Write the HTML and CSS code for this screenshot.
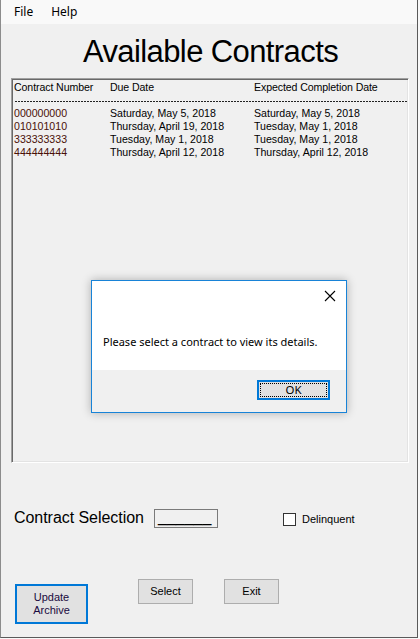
FILE: index.html
```html
<!DOCTYPE html>
<html>
<head>
<meta charset="utf-8">
<link rel="stylesheet" href="styles.css">
</head>
<body>
<div class="window">
  <div class="menubar">
    <span class="menu-item">File</span>
    <span class="menu-item">Help</span>
  </div>
  <h1 class="title">Available Contracts</h1>
  <div class="listbox">
    <div class="list-row list-head">
      <span>Contract Number</span>
      <span>Due Date</span>
      <span class="col3">Expected Completion Date</span>
    </div>
    <div class="dots"></div>
    <div class="list-rows">
      <div class="list-row"><span class="num">000000000</span><span>Saturday, May 5, 2018</span><span>Saturday, May 5, 2018</span></div>
      <div class="list-row"><span class="num">010101010</span><span>Thursday, April 19, 2018</span><span>Tuesday, May 1, 2018</span></div>
      <div class="list-row"><span class="num">333333333</span><span>Tuesday, May 1, 2018</span><span>Tuesday, May 1, 2018</span></div>
      <div class="list-row"><span class="num">444444444</span><span>Thursday, April 12, 2018</span><span>Thursday, April 12, 2018</span></div>
    </div>
  </div>
  <div class="selection-row">
    <span class="sel-label">Contract Selection</span>
    <span class="textbox">______</span>
    <label class="check">
      <span class="check-box"></span>
      <span class="check-text">Delinquent</span>
    </label>
  </div>
  <div class="button-row">
    <button class="btn btn-update">Update<br>Archive</button>
    <button class="btn btn-select">Select</button>
    <button class="btn btn-exit">Exit</button>
  </div>

  <div class="dialog">
    <div class="dialog-body">
      <div class="dialog-top">
        <svg class="close" width="12" height="12" viewBox="0 0 12 12"><path d="M1 1 L11 11 M11 1 L1 11" stroke="#000" stroke-width="1.1" fill="none"/></svg>
      </div>
      <p class="dialog-msg">Please select a contract to view its details.</p>
    </div>
    <div class="dialog-foot">
      <button class="ok"><span class="ok-focus">OK</span></button>
    </div>
  </div>
</div>
</body>
</html>
```
FILE: styles.css
```css
html, body {
  margin: 0;
  padding: 0;
  background: #f9f9f9;
}
body {
  width: 420px;
  height: 639px;
  overflow: hidden;
  font-family: "Liberation Sans", Arial, sans-serif;
}
.window {
  position: relative;
  width: 418px;
  height: 638px;
  box-sizing: border-box;
  background: #f0f0f0;
  border-left: 1px solid #8c8c8c;
  border-right: 1px solid #5a5a5a;
  border-bottom: 1px solid #5a5a5a;
  display: flex;
  flex-direction: column;
}
.menubar {
  height: 24px;
  background: #f9f9f9;
  display: flex;
  align-items: center;
  padding-left: 13px;
  gap: 18px;
  font-family: "Noto Sans", "Open Sans", sans-serif;
  font-size: 12px;
  color: #000;
}
.menu-item {
  line-height: 16px;
  margin-top: -1px;
}
.title {
  margin: 10px 0 0 0;
  height: 36px;
  line-height: 36px;
  font-weight: normal;
  font-size: 31px;
  letter-spacing: -0.6px;
  text-align: center;
  color: #000;
  padding-left: 3px;
}
.listbox {
  margin: 8px 0 0 10px;
  width: 398px;
  height: 385px;
  box-sizing: border-box;
  border: 1px solid;
  border-color: #a0a0a0 #ffffff #ffffff #a0a0a0;
  box-shadow: inset 1px 1px 0 #696969, inset -1px -1px 0 #e3e3e3;
  padding: 2px 0 0 2px;
  font-size: 10.6px;
  color: #000;
}
.list-row {
  display: grid;
  grid-template-columns: 96px 144px auto;
  height: 13px;
  line-height: 13px;
  white-space: nowrap;
}
.list-head {
  letter-spacing: -0.1px;
}
.dots {
  margin: 7px 0 0 1px;
  width: 392px;
  height: 1px;
  background-image: repeating-linear-gradient(90deg, #222 0 2px, transparent 2px 3px);
}
.list-rows {
  margin-top: 5px;
}
.num {
  color: #4a1008;
}
.selection-row {
  margin-top: 45px;
  height: 20px;
  display: flex;
  align-items: center;
  padding-left: 13px;
}
.sel-label {
  font-size: 16px;
  width: 140px;
  white-space: nowrap;
  letter-spacing: -0.05px;
}
.textbox {
  width: 64px;
  height: 19px;
  box-sizing: border-box;
  border: 1px solid #7a7a7a;
  background: #f0f0f0;
  font-size: 16px;
  line-height: 14px;
  padding-left: 3px;
  white-space: nowrap;
}
.check {
  margin-left: 65px;
  margin-top: 3px;
  display: flex;
  align-items: center;
  gap: 6px;
}
.check-box {
  width: 13px;
  height: 13px;
  box-sizing: border-box;
  border: 1px solid #333;
  background: #fff;
}
.check-text {
  font-size: 11px;
  line-height: 13px;
}
.button-row {
  margin-top: 51px;
  display: flex;
  align-items: flex-start;
  padding-left: 14px;
}
.btn {
  font-family: "Liberation Sans", Arial, sans-serif;
  font-size: 11px;
  line-height: 13px;
  color: #000;
  background: #e1e1e1;
  border: 1px solid #adadad;
  padding: 0;
  margin: 0;
  box-sizing: border-box;
}
.btn-update {
  width: 73px;
  height: 40px;
  margin-top: 5px;
  border: 2px solid #0078d7;
  color: #1a0a40;
}
.btn-select {
  width: 55px;
  height: 25px;
  margin-left: 50px;
}
.btn-exit {
  width: 55px;
  height: 25px;
  margin-left: 31px;
}
.dialog {
  position: absolute;
  left: 90px;
  top: 280px;
  width: 256px;
  height: 133px;
  box-sizing: border-box;
  border: 1px solid #1883d7;
  background: #f0f0f0;
  box-shadow: 0 0 9px rgba(0, 0, 0, 0.28);
  display: flex;
  flex-direction: column;
  font-family: "Noto Sans", "Open Sans", sans-serif;
  font-size: 11px;
  color: #000;
}
.dialog-body {
  background: #fff;
  height: 89px;
  display: flex;
  flex-direction: column;
}
.dialog-top {
  height: 30px;
  display: flex;
  justify-content: flex-end;
  align-items: center;
  padding-right: 10px;
}
.close {
  display: block;
}
.dialog-msg {
  margin: 23px 0 0 11px;
  line-height: 16px;
  white-space: nowrap;
}
.dialog-foot {
  flex: 1;
  display: flex;
  justify-content: flex-end;
  align-items: flex-start;
  padding: 10px 16px 0 0;
}
.ok {
  width: 73px;
  height: 20px;
  box-sizing: border-box;
  border: 2px solid #0078d7;
  background: #e1e1e1;
  padding: 1px;
  margin: 0;
  font-family: "Noto Sans", "Open Sans", sans-serif;
  font-size: 11.4px;
  color: #000;
  display: flex;
}
.ok-focus {
  flex: 1;
  border: 1px dotted #000;
  line-height: 12px;
  text-align: center;
}
```
